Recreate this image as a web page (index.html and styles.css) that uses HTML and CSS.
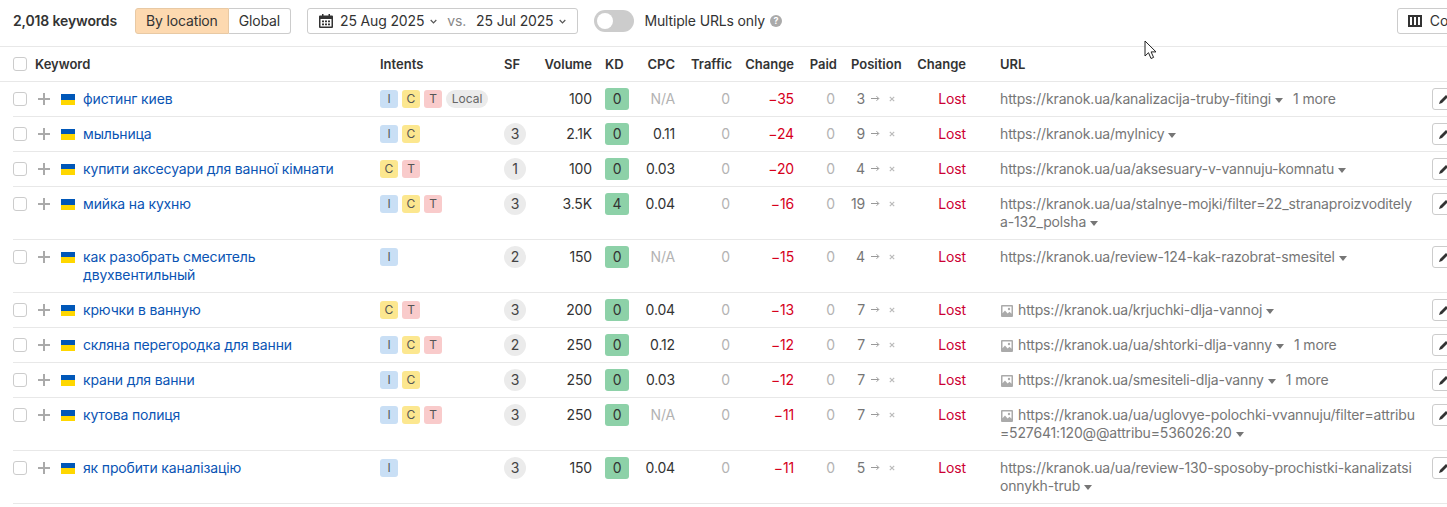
FILE: index.html
```html
<!DOCTYPE html>
<html lang="en">
<head>
    <meta charset="UTF-8">
    <meta name="viewport" content="width=device-width, initial-scale=1.0">
    <title>Organic keywords</title>
    <link rel="stylesheet" href="styles.css">
</head>
<body>
    <svg class="sprites" width="0" height="0">
        <symbol id="plus" viewBox="0 0 12 12"><path d="M5 0h2v5h5v2H7v5H5V7H0V5h5z"/></symbol>
        <symbol id="arrow" viewBox="0 0 9 7"><path d="M0 3.5h7.5M5.5 1.2l2.3 2.3-2.3 2.3" fill="none" stroke="currentColor"/></symbol>
        <symbol id="cross" viewBox="0 0 6 6"><path d="M.8.8l4.4 4.4M5.2.8L.8 5.2" fill="none" stroke="currentColor" stroke-width="1.2"/></symbol>
        <symbol id="image" viewBox="0 0 12 12"><path fill-rule="evenodd" d="M1 0h10a1 1 0 0 1 1 1v10a1 1 0 0 1-1 1H1a1 1 0 0 1-1-1V1a1 1 0 0 1 1-1zm.5 1.5v6.7L4 5.6l2.600 2.800 1.900-1.700 2 2V1.500z"/><circle cx="8" cy="4" r="1.200"/></symbol>
        <symbol id="pencil" viewBox="0 0 12 12"><path d="M1 11l1-3 6-6 2 2-6 6z"/></symbol>
    </svg>

    <div class="page">
        <div class="toolbar">
            <b class="total">2,018 keywords</b>
            <div class="segment">
                <span class="seg-item seg-on">By location</span>
                <span class="seg-item">Global</span>
            </div>
            <div class="dates">
                <svg class="cal" width="14" height="14" viewBox="0 0 14 14"><path fill-rule="evenodd" d="M3 0h1.500v1.500h5V0H11v1.500h2a1 1 0 0 1 1 1V13a1 1 0 0 1-1 1H1a1 1 0 0 1-1-1V2.500a1 1 0 0 1 1-1h2zM1.500 5v7.500h11V5zM3 6.500h2v1.700H3zm3 0h2v1.700H6zm3 0h2v1.700H9zm-6 3h2v1.700H3zm3 0h2v1.700H6zm3 0h2v1.700H9z"/></svg>
                <span>25 Aug 2025</span>
                <svg class="chev" width="7" height="5" viewBox="0 0 7 5"><path d="M.7 1l2.800 2.800L6.300 1" fill="none" stroke="currentColor" stroke-width="1.200"/></svg>
                <span class="vs">vs.</span>
                <span>25 Jul 2025</span>
                <svg class="chev" width="7" height="5" viewBox="0 0 7 5"><path d="M.7 1l2.800 2.800L6.300 1" fill="none" stroke="currentColor" stroke-width="1.200"/></svg>
            </div>
            <span class="toggle"><span class="knob"></span></span>
            <span class="toggle-label">Multiple URLs only</span>
            <span class="help">?</span>
            <div class="columns-btn">
                <svg width="14" height="12" viewBox="0 0 14 12"><path fill-rule="evenodd" d="M0 0h14v12H0zm2 2v8h2V2zm4 0v8h2V2zm4 0v8h2V2z"/></svg>
                <span>Columns</span>
            </div>
        </div>

        <div class="cols head">
            <div class="key"><span class="check"></span>Keyword</div>
            <div>Intents</div>
            <div>SF</div>
            <div class="num">Volume</div>
            <div class="kd-cell">KD</div>
            <div class="num">CPC</div>
            <div class="num">Traffic</div>
            <div class="num">Change</div>
            <div class="num">Paid</div>
            <div class="pos-cell">Position</div>
            <div class="num">Change</div>
            <div class="url-cell">URL</div>
        </div>

        <div class="cols row">
            <div class="key"><span class="check"></span><svg class="plus"><use href="#plus"/></svg><span class="flag"></span><a class="link">фистинг киев</a></div>
            <div class="chips"><span class="chip c-i">I</span><span class="chip c-c">C</span><span class="chip c-t">T</span><span class="chip c-local">Local</span></div>
            <div></div>
            <div class="num">100</div>
            <div class="kd-cell"><span class="kd">0</span></div>
            <div class="num muted">N/A</div>
            <div class="num muted zero">0</div>
            <div class="num red">−35</div>
            <div class="num muted zero">0</div>
            <div class="pos-cell pos"><span class="pos-n">3</span><svg class="arr"><use href="#arrow"/></svg><svg class="x"><use href="#cross"/></svg></div>
            <div class="num lost">Lost</div>
            <div class="url-cell url">https://kranok.ua/kanalizacija-truby-fitingi<i class="caret"></i><span class="more">1 more</span></div>
            <div class="act-cell"><span class="act"><svg><use href="#pencil"/></svg></span></div>
        </div>

        <div class="cols row">
            <div class="key"><span class="check"></span><svg class="plus"><use href="#plus"/></svg><span class="flag"></span><a class="link">мыльница</a></div>
            <div class="chips"><span class="chip c-i">I</span><span class="chip c-c">C</span></div>
            <div><span class="sf">3</span></div>
            <div class="num">2.1K</div>
            <div class="kd-cell"><span class="kd">0</span></div>
            <div class="num">0.11</div>
            <div class="num muted zero">0</div>
            <div class="num red">−24</div>
            <div class="num muted zero">0</div>
            <div class="pos-cell pos"><span class="pos-n">9</span><svg class="arr"><use href="#arrow"/></svg><svg class="x"><use href="#cross"/></svg></div>
            <div class="num lost">Lost</div>
            <div class="url-cell url">https://kranok.ua/mylnicy<i class="caret"></i></div>
            <div class="act-cell"><span class="act"><svg><use href="#pencil"/></svg></span></div>
        </div>

        <div class="cols row">
            <div class="key"><span class="check"></span><svg class="plus"><use href="#plus"/></svg><span class="flag"></span><a class="link">купити аксесуари для ванної кімнати</a></div>
            <div class="chips"><span class="chip c-c">C</span><span class="chip c-t">T</span></div>
            <div><span class="sf">1</span></div>
            <div class="num">100</div>
            <div class="kd-cell"><span class="kd">0</span></div>
            <div class="num">0.03</div>
            <div class="num muted zero">0</div>
            <div class="num red">−20</div>
            <div class="num muted zero">0</div>
            <div class="pos-cell pos"><span class="pos-n">4</span><svg class="arr"><use href="#arrow"/></svg><svg class="x"><use href="#cross"/></svg></div>
            <div class="num lost">Lost</div>
            <div class="url-cell url">https://kranok.ua/ua/aksesuary-v-vannuju-komnatu<i class="caret"></i></div>
            <div class="act-cell"><span class="act"><svg><use href="#pencil"/></svg></span></div>
        </div>

        <div class="cols row">
            <div class="key"><span class="check"></span><svg class="plus"><use href="#plus"/></svg><span class="flag"></span><a class="link">мийка на кухню</a></div>
            <div class="chips"><span class="chip c-i">I</span><span class="chip c-c">C</span><span class="chip c-t">T</span></div>
            <div><span class="sf">3</span></div>
            <div class="num">3.5K</div>
            <div class="kd-cell"><span class="kd">4</span></div>
            <div class="num">0.04</div>
            <div class="num muted zero">0</div>
            <div class="num red">−16</div>
            <div class="num muted zero">0</div>
            <div class="pos-cell pos"><span class="pos-n">19</span><svg class="arr"><use href="#arrow"/></svg><svg class="x"><use href="#cross"/></svg></div>
            <div class="num lost">Lost</div>
            <div class="url-cell url">https://kranok.ua/ua/stalnye-mojki/filter=22_stranaproizvoditelya-132_polsha<i class="caret"></i></div>
            <div class="act-cell"><span class="act"><svg><use href="#pencil"/></svg></span></div>
        </div>

        <div class="cols row">
            <div class="key"><span class="check"></span><svg class="plus"><use href="#plus"/></svg><span class="flag"></span><a class="link">как разобрать смеситель двухвентильный</a></div>
            <div class="chips"><span class="chip c-i">I</span></div>
            <div><span class="sf">2</span></div>
            <div class="num">150</div>
            <div class="kd-cell"><span class="kd">0</span></div>
            <div class="num muted">N/A</div>
            <div class="num muted zero">0</div>
            <div class="num red">−15</div>
            <div class="num muted zero">0</div>
            <div class="pos-cell pos"><span class="pos-n">4</span><svg class="arr"><use href="#arrow"/></svg><svg class="x"><use href="#cross"/></svg></div>
            <div class="num lost">Lost</div>
            <div class="url-cell url">https://kranok.ua/review-124-kak-razobrat-smesitel<i class="caret"></i></div>
            <div class="act-cell"><span class="act"><svg><use href="#pencil"/></svg></span></div>
        </div>

        <div class="cols row">
            <div class="key"><span class="check"></span><svg class="plus"><use href="#plus"/></svg><span class="flag"></span><a class="link">крючки в ванную</a></div>
            <div class="chips"><span class="chip c-c">C</span><span class="chip c-t">T</span></div>
            <div><span class="sf">3</span></div>
            <div class="num">200</div>
            <div class="kd-cell"><span class="kd">0</span></div>
            <div class="num">0.04</div>
            <div class="num muted zero">0</div>
            <div class="num red">−13</div>
            <div class="num muted zero">0</div>
            <div class="pos-cell pos"><span class="pos-n">7</span><svg class="arr"><use href="#arrow"/></svg><svg class="x"><use href="#cross"/></svg></div>
            <div class="num lost">Lost</div>
            <div class="url-cell url"><svg class="img"><use href="#image"/></svg>https://kranok.ua/krjuchki-dlja-vannoj<i class="caret"></i></div>
            <div class="act-cell"><span class="act"><svg><use href="#pencil"/></svg></span></div>
        </div>

        <div class="cols row">
            <div class="key"><span class="check"></span><svg class="plus"><use href="#plus"/></svg><span class="flag"></span><a class="link">скляна перегородка для ванни</a></div>
            <div class="chips"><span class="chip c-i">I</span><span class="chip c-c">C</span><span class="chip c-t">T</span></div>
            <div><span class="sf">2</span></div>
            <div class="num">250</div>
            <div class="kd-cell"><span class="kd">0</span></div>
            <div class="num">0.12</div>
            <div class="num muted zero">0</div>
            <div class="num red">−12</div>
            <div class="num muted zero">0</div>
            <div class="pos-cell pos"><span class="pos-n">7</span><svg class="arr"><use href="#arrow"/></svg><svg class="x"><use href="#cross"/></svg></div>
            <div class="num lost">Lost</div>
            <div class="url-cell url"><svg class="img"><use href="#image"/></svg>https://kranok.ua/ua/shtorki-dlja-vanny<i class="caret"></i><span class="more">1 more</span></div>
            <div class="act-cell"><span class="act"><svg><use href="#pencil"/></svg></span></div>
        </div>

        <div class="cols row">
            <div class="key"><span class="check"></span><svg class="plus"><use href="#plus"/></svg><span class="flag"></span><a class="link">крани для ванни</a></div>
            <div class="chips"><span class="chip c-i">I</span><span class="chip c-c">C</span></div>
            <div><span class="sf">3</span></div>
            <div class="num">250</div>
            <div class="kd-cell"><span class="kd">0</span></div>
            <div class="num">0.03</div>
            <div class="num muted zero">0</div>
            <div class="num red">−12</div>
            <div class="num muted zero">0</div>
            <div class="pos-cell pos"><span class="pos-n">7</span><svg class="arr"><use href="#arrow"/></svg><svg class="x"><use href="#cross"/></svg></div>
            <div class="num lost">Lost</div>
            <div class="url-cell url"><svg class="img"><use href="#image"/></svg>https://kranok.ua/smesiteli-dlja-vanny<i class="caret"></i><span class="more">1 more</span></div>
            <div class="act-cell"><span class="act"><svg><use href="#pencil"/></svg></span></div>
        </div>

        <div class="cols row">
            <div class="key"><span class="check"></span><svg class="plus"><use href="#plus"/></svg><span class="flag"></span><a class="link">кутова полиця</a></div>
            <div class="chips"><span class="chip c-i">I</span><span class="chip c-c">C</span><span class="chip c-t">T</span></div>
            <div><span class="sf">3</span></div>
            <div class="num">250</div>
            <div class="kd-cell"><span class="kd">0</span></div>
            <div class="num muted">N/A</div>
            <div class="num muted zero">0</div>
            <div class="num red">−11</div>
            <div class="num muted zero">0</div>
            <div class="pos-cell pos"><span class="pos-n">7</span><svg class="arr"><use href="#arrow"/></svg><svg class="x"><use href="#cross"/></svg></div>
            <div class="num lost">Lost</div>
            <div class="url-cell url"><svg class="img"><use href="#image"/></svg>https://kranok.ua/ua/uglovye-polochki-vvannuju/filter=attribu=527641:120@@attribu=536026:20<i class="caret"></i></div>
            <div class="act-cell"><span class="act"><svg><use href="#pencil"/></svg></span></div>
        </div>

        <div class="cols row">
            <div class="key"><span class="check"></span><svg class="plus"><use href="#plus"/></svg><span class="flag"></span><a class="link">як пробити каналізацію</a></div>
            <div class="chips"><span class="chip c-i">I</span></div>
            <div><span class="sf">3</span></div>
            <div class="num">150</div>
            <div class="kd-cell"><span class="kd">0</span></div>
            <div class="num">0.04</div>
            <div class="num muted zero">0</div>
            <div class="num red">−11</div>
            <div class="num muted zero">0</div>
            <div class="pos-cell pos"><span class="pos-n">5</span><svg class="arr"><use href="#arrow"/></svg><svg class="x"><use href="#cross"/></svg></div>
            <div class="num lost">Lost</div>
            <div class="url-cell url">https://kranok.ua/ua/review-130-sposoby-prochistki-kanalizatsionnykh-trub<i class="caret"></i></div>
            <div class="act-cell"><span class="act"><svg><use href="#pencil"/></svg></span></div>
        </div>
    </div>

    <svg class="cursor" width="14" height="20" viewBox="0 0 14 20"><path d="M1 1v15l3.500-3.300L7 18.500l2.600-1.100-2.500-5.500H12z" fill="#fff" stroke="#222" stroke-width="1"/></svg>
</body>
</html>
```

FILE: styles.css
```css
html, body {
    margin: 0;
    height: 507px;
    overflow: hidden;
    background: #fff;
}
body {
    font-family: Inter, "Noto Sans", sans-serif;
    font-size: 14px;
    letter-spacing: -0.15px;
    line-height: 18px;
    color: #333;
}
.sprites {
    display: block;
}
.page {
    width: 1498px;
}

/* toolbar */
.toolbar {
    display: flex;
    align-items: center;
    height: 42px;
    padding: 0 0 4px 13px;
    border-bottom: 1px solid #e8e8e8;
}
.total {
    font-weight: 600;
    width: 122px;
}
.segment {
    display: flex;
    height: 26px;
    box-sizing: border-box;
}
.seg-item {
    padding: 3px 10px;
    border: 1px solid #ccc;
    border-radius: 0 3px 3px 0;
    border-left: none;
    line-height: 18px;
}
.seg-on {
    background: #fdd9b0;
    border: 1px solid #e8c9a4;
    border-radius: 3px 0 0 3px;
}
.dates {
    display: flex;
    align-items: center;
    height: 26px;
    box-sizing: border-box;
    margin-left: 16px;
    padding: 0 11px 0 11px;
    border: 1px solid #ccc;
    border-radius: 3px;
}
.cal {
    margin-right: 7px;
    fill: #333;
}
.chev {
    margin-left: 6px;
    color: #555;
}
.vs {
    margin: 0 10px 0 10px;
    color: #888;
}
.toggle {
    width: 40px;
    height: 22px;
    margin-left: 16px;
    background: #ccc;
    border-radius: 11px;
    display: flex;
    align-items: center;
    padding-left: 3px;
    box-sizing: border-box;
}
.knob {
    width: 16px;
    height: 16px;
    background: #fff;
    border-radius: 50%;
}
.toggle-label {
    margin-left: 10px;
}
.help {
    width: 12px;
    height: 12px;
    margin-left: 5px;
    background: #aaa;
    color: #fff;
    border-radius: 50%;
    font-size: 9px;
    font-weight: 700;
    line-height: 12px;
    text-align: center;
}
.columns-btn {
    display: flex;
    align-items: center;
    gap: 8px;
    height: 26px;
    box-sizing: border-box;
    margin-left: auto;
    padding: 0 10px;
    border: 1px solid #ccc;
    border-radius: 3px;
    fill: #333;
}

/* table */
.cols {
    display: grid;
    grid-template-columns: 367px 124px 36px 52px 40px 43px 57px 62px 43px 68px 61px 452px 82px;
}
.head {
    padding-left: 13px;
    height: 34px;
    align-items: center;
    border-bottom: 1px solid #e8e8e8;
    font-size: 13px;
    letter-spacing: 0;
    font-weight: 600;
}
.row {
    margin-left: 13px;
    padding: 8px 0;
    border-bottom: 1px solid #e8e8e8;
}
.num {
    text-align: right;
}
.key {
    display: flex;
    align-items: flex-start;
}
.check {
    flex: none;
    width: 14px;
    height: 14px;
    margin: 2px 8px 0 0;
    box-sizing: border-box;
    border: 1px solid #ccc;
    border-radius: 3px;
    background: #fff;
}
.plus {
    flex: none;
    width: 12px;
    height: 12px;
    margin: 3px 11px 0 3px;
    fill: #aaa;
}
.flag {
    flex: none;
    width: 14px;
    height: 11px;
    margin: 4px 8px 0 0;
    background: linear-gradient(#0057b8 50%, #ffd700 50%);
}
.link {
    color: #0a54b4;
    max-width: 262px;
}
.chips {
    display: flex;
    gap: 4px;
}
.chip {
    width: 18px;
    height: 18px;
    font-size: 12px;
    letter-spacing: 0;
    line-height: 18px;
    text-align: center;
    border-radius: 3px;
    color: #555;
}
.c-i { background: #c9dff5; }
.c-c { background: #fce78f; }
.c-t { background: #f9cbcb; }
.c-local {
    width: 42px;
    background: #ebebeb;
    border-radius: 9px;
    color: #666;
}
.sf {
    display: block;
    width: 22px;
    height: 22px;
    margin: -2px 0;
    line-height: 22px;
    text-align: center;
    border-radius: 50%;
    background: #ebebeb;
    color: #444;
}
.kd-cell {
    padding-left: 13px;
}
.kd {
    display: block;
    width: 24px;
    height: 22px;
    margin: -2px 0;
    line-height: 22px;
    text-align: center;
    border-radius: 3px;
    background: #8dd1a8;
}
.muted {
    color: #b3b3b3;
}
.zero {
    padding-right: 2px;
}
.red {
    color: #d6001c;
}
.lost {
    color: #cc0033;
}
.pos-cell {
    padding-left: 14px;
}
.pos {
    display: flex;
    align-items: flex-start;
    color: #767676;
}
.pos-n {
    width: 14px;
    text-align: right;
}
.arr {
    width: 9px;
    height: 7px;
    margin: 5px 0 0 6px;
    color: #999;
}
.x {
    width: 6px;
    height: 6px;
    margin: 6px 0 0 9px;
    color: #bbb;
}
.url-cell {
    padding-left: 34px;
}
.url {
    color: #767676;
    word-break: break-all;
}
.img {
    width: 12px;
    height: 12px;
    margin: 0 5px 0 1px;
    vertical-align: -2px;
    fill: #aaa;
}
.caret {
    display: inline-block;
    margin-left: 4px;
    border: 4px solid transparent;
    border-top: 5px solid #767676;
    border-bottom: none;
    vertical-align: 1px;
}
.more {
    margin-left: 10px;
    word-break: normal;
}
.act-cell {
    padding-left: 14px;
}
.act {
    display: flex;
    align-items: center;
    width: 40px;
    height: 22px;
    margin: -2px 0;
    padding-left: 5px;
    box-sizing: border-box;
    border: 1px solid #ccc;
    border-radius: 3px;
}
.act svg {
    width: 12px;
    height: 12px;
    fill: #333;
}

/* mouse pointer caught in the screenshot */
.cursor {
    position: absolute;
    left: 1144px;
    top: 40px;
}
```
